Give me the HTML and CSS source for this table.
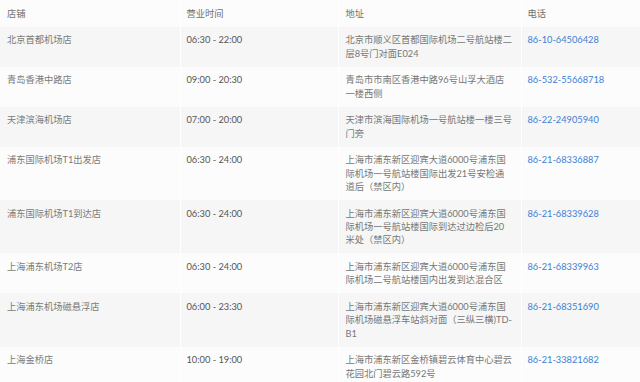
FILE: index.html
```html
<!DOCTYPE html>
<html lang="zh-CN">
<head>
<meta charset="utf-8">
<title>门店列表</title>
<link rel="stylesheet" href="styles.css">
</head>
<body>
<table class="stores">
  <colgroup>
    <col class="c-name"><col class="c-hours"><col class="c-addr"><col class="c-tel">
  </colgroup>
  <thead>
    <tr><th>店铺</th><th>营业时间</th><th class="addr">地址</th><th>电话</th></tr>
  </thead>
  <tbody>
    <tr><td class="name">北京首都机场店</td><td class="hours">06:30 - 22:00</td><td class="addr">北京市顺义区首都国际机场二号航站楼二<br>层8号门对面E024</td><td><a class="tel" href="#">86-10-64506428</a></td></tr>
    <tr><td class="name">青岛香港中路店</td><td class="hours">09:00 - 20:30</td><td class="addr">青岛市市南区香港中路96号山孚大酒店<br>一楼西侧</td><td><a class="tel" href="#">86-532-55668718</a></td></tr>
    <tr><td class="name">天津滨海机场店</td><td class="hours">07:00 - 20:00</td><td class="addr">天津市滨海国际机场一号航站楼一楼三号<br>门旁</td><td><a class="tel" href="#">86-22-24905940</a></td></tr>
    <tr><td class="name">浦东国际机场T1出发店</td><td class="hours">06:30 - 24:00</td><td class="addr">上海市浦东新区迎宾大道6000号浦东国<br>际机场一号航站楼国际出发21号安检通<br>道后（禁区内）</td><td><a class="tel" href="#">86-21-68336887</a></td></tr>
    <tr><td class="name">浦东国际机场T1到达店</td><td class="hours">06:30 - 24:00</td><td class="addr">上海市浦东新区迎宾大道6000号浦东国<br>际机场一号航站楼国际到达过边检后20<br>米处（禁区内）</td><td><a class="tel" href="#">86-21-68339628</a></td></tr>
    <tr><td class="name">上海浦东机场T2店</td><td class="hours">06:30 - 24:00</td><td class="addr">上海市浦东新区迎宾大道6000号浦东国<br>际机场二号航站楼国内出发到达混合区</td><td><a class="tel" href="#">86-21-68339963</a></td></tr>
    <tr><td class="name">上海浦东机场磁悬浮店</td><td class="hours">06:00 - 23:30</td><td class="addr">上海市浦东新区迎宾大道6000号浦东国<br>际机场磁悬浮车站斜对面（三纵三横)TD-<br>B1</td><td><a class="tel" href="#">86-21-68351690</a></td></tr>
    <tr><td class="name">上海金桥店</td><td class="hours">10:00 - 19:00</td><td class="addr">上海市浦东新区金桥镇碧云体育中心碧云<br>花园北门碧云路592号</td><td><a class="tel" href="#">86-21-33821682</a></td></tr>
  </tbody>
</table>
</body>
</html>
```
FILE: styles.css
```css
html, body {
  margin: 0;
  padding: 0;
  background: #fbfcfb;
}
body {
  font-family: Lato, "Noto Sans CJK SC", sans-serif;
  font-size: 9.25px;
  line-height: 13.4px;
  color: #666;
}
.stores {
  width: 640px;
  border-collapse: collapse;
  table-layout: fixed;
}
.c-name { width: 180px; }
.c-hours { width: 158px; }
.c-addr { width: 183px; }
.c-tel { width: 119px; }
.stores th,
.stores td {
  text-align: left;
  vertical-align: top;
  font-weight: normal;
  padding: 6.6px 5px 6.6px 6px;
  border-left: 1px solid #ffffff;
}
.stores th:first-child,
.stores td:first-child {
  border-left: 0;
  padding-left: 7px;
}
.stores th.addr,
.stores td.addr {
  padding-left: 7px;
}
.stores th {
  color: #707070;
}
.stores tbody tr:nth-child(odd) {
  background: #f5f6f5;
}
.name {
  color: #7a7a7a;
}
.hours {
  color: #555;
}
.addr {
  color: #777;
}
.tel {
  color: #3d7fd6;
  text-decoration: none;
}
```
